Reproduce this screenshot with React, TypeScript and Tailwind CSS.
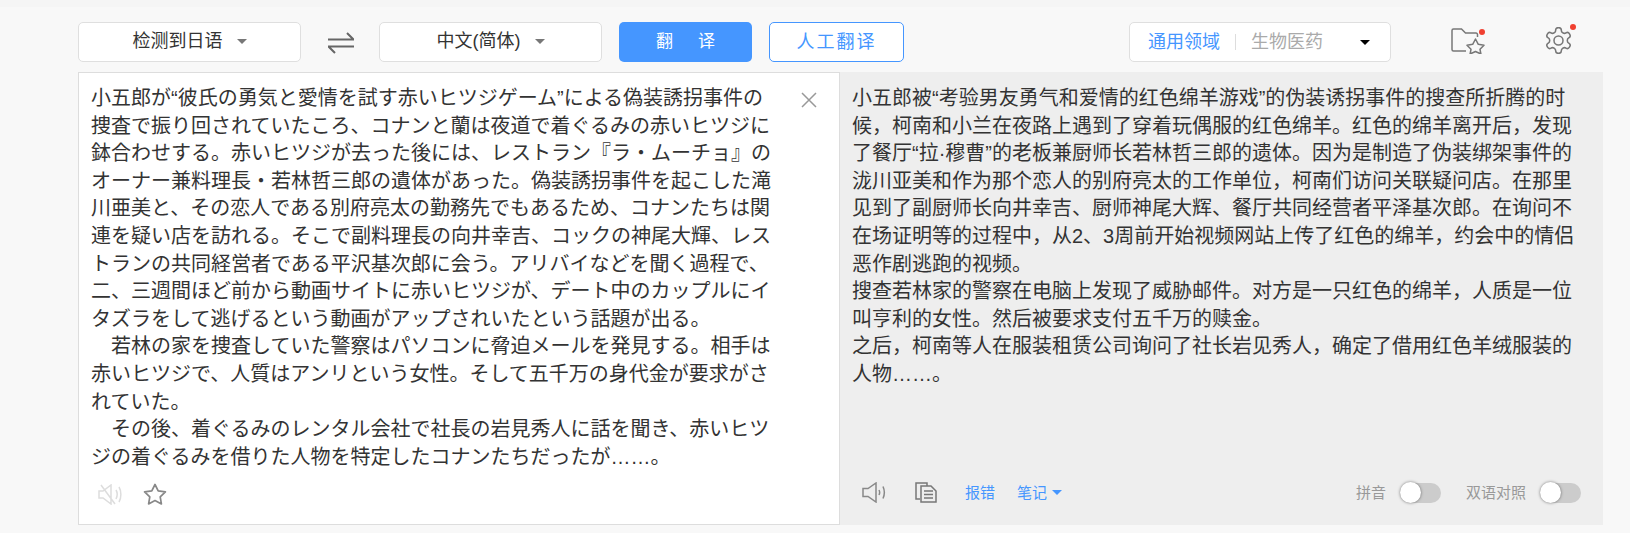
import React from "react";

const jp = ["小五郎が“彼氏の勇気と愛情を試す赤いヒツジゲーム”による偽装誘拐事件の","捜査で振り回されていたころ、コナンと蘭は夜道で着ぐるみの赤いヒツジに","鉢合わせする。赤いヒツジが去った後には、レストラン『ラ・ムーチョ』の","オーナー兼料理長・若林哲三郎の遺体があった。偽装誘拐事件を起こした滝","川亜美と、その恋人である別府亮太の勤務先でもあるため、コナンたちは関","連を疑い店を訪れる。そこで副料理長の向井幸吉、コックの神尾大輝、レス","トランの共同経営者である平沢基次郎に会う。アリバイなどを聞く過程で、","二、三週間ほど前から動画サイトに赤いヒツジが、デート中のカップルにイ","タズラをして逃げるという動画がアップされいたという話題が出る。","　若林の家を捜査していた警察はパソコンに脅迫メールを発見する。相手は","赤いヒツジで、人質はアンリという女性。そして五千万の身代金が要求がさ","れていた。","　その後、着ぐるみのレンタル会社で社長の岩見秀人に話を聞き、赤いヒツ","ジの着ぐるみを借りた人物を特定したコナンたちだったが……。"];
const zh = ["小五郎被“考验男友勇气和爱情的红色绵羊游戏”的伪装诱拐事件的搜查所折腾的时","候，柯南和小兰在夜路上遇到了穿着玩偶服的红色绵羊。红色的绵羊离开后，发现","了餐厅“拉·穆曹”的老板兼厨师长若林哲三郎的遗体。因为是制造了伪装绑架事件的","泷川亚美和作为那个恋人的别府亮太的工作单位，柯南们访问关联疑问店。在那里","见到了副厨师长向井幸吉、厨师神尾大辉、餐厅共同经营者平泽基次郎。在询问不","在场证明等的过程中，从2、3周前开始视频网站上传了红色的绵羊，约会中的情侣","恶作剧逃跑的视频。","搜查若林家的警察在电脑上发现了威胁邮件。对方是一只红色的绵羊，人质是一位","叫亨利的女性。然后被要求支付五千万的赎金。","之后，柯南等人在服装租赁公司询问了社长岩见秀人，确定了借用红色羊绒服装的","人物……。"];

const Line = ({ text }: { text: string }) => (
  <div className="text-[20px] leading-[27.600px] whitespace-nowrap">{text}</div>
);

const Caret = () => <span className="inline-block w-0 h-0 border-x-[5px] border-x-transparent border-t-[5px] border-t-[#777]" />;

const Toggle = ({ label }: { label: string }) => (
  <div className="flex items-center gap-[14px]">
    <span className="text-[15px] text-[#999]">{label}</span>
    <span className="relative w-[41px] h-[20px] rounded-full bg-[#ccc]">
      <span className="absolute left-0 top-[-0.5px] w-[21px] h-[21px] rounded-full bg-white shadow-[0_0_3px_rgba(0,0,0,0.5)]" />
    </span>
  </div>
);

const Dot = ({ cls }: { cls: string }) => <span className={`absolute w-[6px] h-[6px] rounded-full bg-[#f04030] ${cls}`} />;

export default function App() {
  return (
    <div className="w-[1630px] h-[533px] bg-[#f8f8f8] font-['Liberation_Sans','Noto_Sans_CJK_SC',sans-serif] overflow-hidden text-[#333]">
      <div className="h-[7px] bg-[#f5f5f5]" />
      <div className="h-[65px] pt-[15px] pl-[78px] flex items-start">
        <button className="w-[223px] h-[40px] pb-[1px] bg-white border border-[#dfdfdf] rounded-[5px] flex items-center justify-center gap-[14px] text-[18px]">检测到日语 <Caret /></button>
        <svg width="26" height="22" viewBox="0 0 26 22" className="ml-[27px] mt-[10px]" fill="none" stroke="#666" strokeWidth="2"><path d="M0 7.500h25.500L19 1M26 14.500H.5L7 21" /></svg>
        <button className="ml-[25px] w-[223px] h-[40px] pb-[1px] bg-white border border-[#dfdfdf] rounded-[5px] flex items-center justify-center gap-[14px] text-[18px]">中文(简体) <Caret /></button>
        <button className="ml-[17px] w-[133px] h-[40px] bg-[#4596ff] rounded-[5px] text-white text-[17px] tracking-[25px] pl-[25px]">翻译</button>
        <button className="ml-[17px] w-[135px] h-[40px] bg-white border border-[#4596ff] rounded-[5px] text-[#4596ff] text-[18px] tracking-[2px]">人工翻译</button>
        <div className="ml-[225px] w-[262px] h-[40px] bg-white border border-[#dfdfdf] rounded-[5px] flex items-center pl-[18px] text-[18px]">
          <span className="text-[#4596ff]">通用领域</span>
          <span className="mx-[15px] w-px h-[16px] bg-[#ddd]" />
          <span className="text-[#aaa]">生物医药</span>
          <span className="ml-[37px] w-0 h-0 border-x-[5px] border-x-transparent border-t-[5px] border-t-black" />
        </div>
        <span className="relative ml-[60px] mt-[6px] w-[34px] h-[26px]">
          <svg width="34" height="26" viewBox="0 0 34 26" fill="none" stroke="#777" strokeWidth="1.500"><path d="M15 23H2.500a1.500 1.500 0 0 1-1.500-1.500V2.500A1.500 1.500 0 0 1 2.500 1h8l4 4H25a1.500 1.500 0 0 1 1.500 1.500V9" /><path strokeLinejoin="round" d="M24.500 11l2.800 5.300 5.700 1-4 4 .9 4.700-5.400-2.500-5.400 2.500.9-4.700-4-4 5.700-1z" /></svg>
          <Dot cls="right-[0px] top-[1px]" />
        </span>
        <span className="relative ml-[60px] mt-[5px] w-[30px] h-[28px]">
          <svg width="27" height="27" viewBox="1.500 1.500 21 21" fill="none" stroke="#777" strokeWidth="1.200" strokeLinejoin="round"><path d="M12.220 2h-.440a2 2 0 0 0-2 2v.180a2 2 0 0 1-1 1.730l-.430.250a2 2 0 0 1-2 0l-.150-.080a2 2 0 0 0-2.730.730l-.220.380a2 2 0 0 0 .730 2.730l.150.100a2 2 0 0 1 1 1.720v.510a2 2 0 0 1-1 1.740l-.150.090a2 2 0 0 0-.730 2.730l.220.380a2 2 0 0 0 2.730.730l.150-.080a2 2 0 0 1 2 0l.430.250a2 2 0 0 1 1 1.730V20a2 2 0 0 0 2 2h.440a2 2 0 0 0 2-2v-.180a2 2 0 0 1 1-1.730l.430-.250a2 2 0 0 1 2 0l.150.080a2 2 0 0 0 2.730-.730l.220-.390a2 2 0 0 0-.730-2.730l-.150-.080a2 2 0 0 1-1-1.740v-.500a2 2 0 0 1 1-1.740l.150-.090a2 2 0 0 0 .730-2.730l-.220-.380a2 2 0 0 0-2.730-.730l-.150.080a2 2 0 0 1-2 0l-.430-.250a2 2 0 0 1-1-1.730V4a2 2 0 0 0-2-2z" /><circle cx="12" cy="12" r="3.500" /></svg>
          <Dot cls="right-[-1px] top-[-3px]" />
        </span>
      </div>
      <div className="ml-[78px] w-[1525px] flex h-[453px]">
        <div className="w-[762px] bg-white border border-[#ddd] relative pl-[12px] pt-[12px] flex flex-col font-['Liberation_Sans','Noto_Sans_CJK_JP',sans-serif]">
          {jp.map((l, i) => <Line key={i} text={l} />)}
          <svg width="16" height="16" viewBox="0 0 16 16" className="absolute right-[22px] top-[19px]" stroke="#999" strokeWidth="1.500"><path d="M1 1l14 14M15 1L1 15" /></svg>
          <div className="absolute left-[19px] bottom-[19px] flex items-center gap-[21px]">
            <svg width="24" height="21" viewBox="0 0 24 21" fill="none" stroke="#ddd" strokeWidth="1.500"><path d="M1 7h4l8-6v19l-8-6H1zM3 1l14 19M18 6c1.500 2.500 1.500 6 0 9M21 3c2.500 4 2.500 11 0 15" /></svg>
            <svg width="24" height="22" viewBox="0 0 24 22" fill="none" stroke="#888" strokeWidth="1.700" strokeLinejoin="round"><path d="M12 1.500l3.200 6.400 7.200 1-5.200 5 1.200 7-6.400-3.400-6.400 3.400 1.200-7-5.200-5 7.200-1z" /></svg>
          </div>
        </div>
        <div className="flex-1 bg-[#eeeeee] relative pl-[12px] pt-[13px]">
          {zh.map((l, i) => <Line key={i} text={l} />)}
          <div className="absolute left-[22px] bottom-[21px] flex items-center">
            <svg width="24" height="21" viewBox="0 0 24 21" fill="none" stroke="#888" strokeWidth="1.500"><path d="M1 6.500h5l8-5.500v19l-8-5.500H1zM17 8c.8 1.500.8 3.500 0 5M21 4.500c1.800 4 1.800 8 0 12" /></svg>
            <svg width="22" height="21" viewBox="0 0 22 21" fill="none" stroke="#777" strokeWidth="1.500" className="ml-[29px]"><path d="M5 17H1V1h11v3M6 4h10l5 5v11H6zM9 9h9M9 12.500h9M9 16h9" /></svg>
            <span className="ml-[28px] text-[15px] text-[#4596ff]">报错</span>
            <span className="ml-[22px] text-[15px] text-[#4596ff]">笔记</span>
            <span className="ml-[5px] w-0 h-0 border-x-[5px] border-x-transparent border-t-[5px] border-t-[#4596ff]" />
          </div>
          <div className="absolute right-[22px] bottom-[21px] flex items-center gap-[25px]">
            <Toggle label="拼音" />
            <Toggle label="双语对照" />
          </div>
        </div>
      </div>
    </div>
  );
}
